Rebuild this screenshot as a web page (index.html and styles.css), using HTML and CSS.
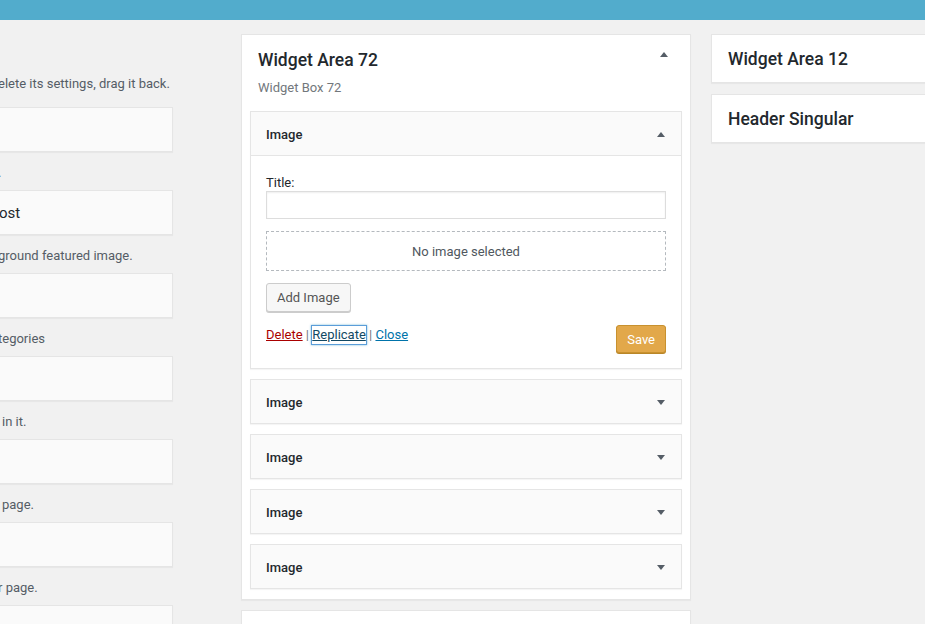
FILE: index.html
```html
<!DOCTYPE html>
<html lang="en">
<head>
<meta charset="utf-8">
<title>Widgets</title>
<link rel="stylesheet" href="styles.css">
</head>
<body>
<div class="topbar"></div>
<div class="page">
  <div class="col-left">
    <p class="intro">elete its settings, drag it back.</p>
    <div class="avail-box"></div>
    <p class="avail-desc">.</p>
    <div class="avail-box"><span class="avail-title">ost</span></div>
    <p class="avail-desc">ground featured image.</p>
    <div class="avail-box"></div>
    <p class="avail-desc">tegories</p>
    <div class="avail-box"></div>
    <p class="avail-desc ind-3">in it.</p>
    <div class="avail-box"></div>
    <p class="avail-desc ind-3">page.</p>
    <div class="avail-box"></div>
    <p class="avail-desc">r page.</p>
    <div class="avail-box"></div>
  </div>

  <div class="col-mid">
    <div class="sidebar">
      <div class="sidebar-head">
        <h2 class="sidebar-title">Widget Area 72</h2>
        <svg class="arrow arrow-head" width="8" height="5" viewBox="0 0 8 5"><path d="M0 5L4 0L8 5Z"/></svg>
      </div>
      <p class="sidebar-desc">Widget Box 72</p>

      <div class="widget">
        <div class="widget-top widget-top-open">
          <h3 class="widget-title">Image</h3>
          <svg class="arrow" width="8" height="5" viewBox="0 0 8 5"><path d="M0 5L4 0L8 5Z"/></svg>
        </div>
        <div class="widget-inside">
          <label class="field-label" for="title-72">Title:</label>
          <input class="field-input" id="title-72" type="text">
          <div class="preview">No image selected</div>
          <button class="btn" type="button">Add Image</button>
          <div class="actions">
            <div class="links"><a class="link link-delete" href="#">Delete</a> | <a class="link link-focus" href="#">Replicate</a> | <a class="link link-close" href="#">Close</a></div>
            <button class="btn-save" type="button">Save</button>
          </div>
        </div>
      </div>

      <div class="widget">
        <div class="widget-top">
          <h3 class="widget-title">Image</h3>
          <svg class="arrow" width="8" height="5" viewBox="0 0 8 5"><path d="M0 0L8 0L4 5Z"/></svg>
        </div>
      </div>
      <div class="widget">
        <div class="widget-top">
          <h3 class="widget-title">Image</h3>
          <svg class="arrow" width="8" height="5" viewBox="0 0 8 5"><path d="M0 0L8 0L4 5Z"/></svg>
        </div>
      </div>
      <div class="widget">
        <div class="widget-top">
          <h3 class="widget-title">Image</h3>
          <svg class="arrow" width="8" height="5" viewBox="0 0 8 5"><path d="M0 0L8 0L4 5Z"/></svg>
        </div>
      </div>
      <div class="widget">
        <div class="widget-top">
          <h3 class="widget-title">Image</h3>
          <svg class="arrow" width="8" height="5" viewBox="0 0 8 5"><path d="M0 0L8 0L4 5Z"/></svg>
        </div>
      </div>
    </div>
    <div class="sidebar sidebar-next"></div>
  </div>

  <div class="col-right">
    <div class="sidebar-closed"><h2 class="sidebar-title">Widget Area 12</h2></div>
    <div class="sidebar-closed"><h2 class="sidebar-title">Header Singular</h2></div>
  </div>
</div>
</body>
</html>
```

FILE: styles.css
```css
html, body {
  overflow: hidden;
}
body {
  margin: 0;
  background: #f1f1f1;
  font-family: Roboto, "Noto Sans", sans-serif;
  font-size: 13px;
  color: #444;
}
.topbar {
  height: 20px;
  background: #52accc;
}
.page {
  display: flex;
  align-items: flex-start;
}

/* left column (available widgets, cut off) */
.col-left {
  flex: none;
  width: 175px;
  margin-left: -2px;
  padding-top: 55px;
}
.intro {
  margin: 0 0 14px;
  line-height: 18px;
  color: #555d66;
  white-space: nowrap;
}
.avail-box {
  box-sizing: border-box;
  height: 45px;
  padding-top: 1px;
  background: #fafafa;
  border: 1px solid #e5e5e5;
  box-shadow: 0 1px 1px rgba(0,0,0,.04);
  display: flex;
  align-items: center;
}
.avail-title {
  font-size: 15px;
  color: #23282d;
}
.avail-desc {
  margin: 0;
  padding: 12px 0 8px;
  line-height: 18px;
  color: #555d66;
  white-space: nowrap;
}
.ind-3 {
  text-indent: 4px;
}

/* middle column */
.col-mid {
  flex: none;
  width: 450px;
  margin-left: 68px;
  padding-top: 14px;
}
.sidebar {
  box-sizing: border-box;
  background: #fff;
  border: 1px solid #e5e5e5;
  box-shadow: 0 1px 1px rgba(0,0,0,.04);
  padding: 0 8px;
}
.sidebar-next {
  margin-top: 10px;
  height: 60px;
}
.sidebar-head {
  display: flex;
  justify-content: space-between;
  align-items: flex-start;
  padding: 13px 14px 0 8px;
}
.sidebar-title {
  margin: 0;
  font-size: 17.5px;
  font-weight: 500;
  line-height: 24px;
  color: #23282d;
}
.arrow {
  display: block;
  flex: none;
  fill: #555d66;
}
.arrow-head {
  margin-top: 4px;
}
.sidebar-desc {
  margin: 7px 0 14px 8px;
  line-height: 18px;
  color: #72777c;
}

.widget {
  background: #fff;
  border: 1px solid #e5e5e5;
  box-shadow: 0 1px 1px rgba(0,0,0,.04);
  margin-bottom: 10px;
}
.widget-top {
  box-sizing: border-box;
  height: 43px;
  background: #fafafa;
  display: flex;
  align-items: center;
  justify-content: space-between;
  padding: 2px 16px 0 15px;
}
.widget-top-open {
  box-sizing: content-box;
  height: 41px;
  border-bottom: 1px solid #e5e5e5;
}
.widget-title {
  margin: 0;
  font-size: 13px;
  font-weight: 500;
  color: #23282d;
}
.widget-inside {
  padding: 17px 15px 15px;
}
.field-label {
  display: block;
  line-height: 18px;
  padding-top: 1px;
  margin-bottom: -1px;
  color: #23282d;
}
.field-input {
  display: block;
  box-sizing: border-box;
  width: 100%;
  height: 28px;
  margin: 0;
  border: 1px solid #ddd;
  box-shadow: inset 0 1px 2px rgba(0,0,0,.07);
  background: #fff;
  padding: 0 6px;
}
.preview {
  box-sizing: border-box;
  margin-top: 12px;
  height: 40px;
  border: 1px dashed #b4b9be;
  display: flex;
  align-items: center;
  justify-content: center;
  color: #50575e;
}
.btn {
  display: block;
  margin-top: 12px;
  height: 29px;
  padding: 0 10px;
  background: #f7f7f7;
  border: 1px solid #ccc;
  border-radius: 3px;
  box-shadow: 0 1px 0 #ccc;
  color: #555;
  font-family: inherit;
  font-size: 13px;
}
.actions {
  margin-top: 13px;
  display: flex;
  justify-content: space-between;
  align-items: flex-start;
}
.links {
  line-height: 18px;
  padding-top: 1px;
  color: #72777c;
}
.link {
  text-decoration: underline;
}
.link-delete {
  color: #a00;
}
.link-close {
  color: #0073aa;
}
.link-focus {
  display: inline-block;
  color: #124964;
  box-shadow: 0 0 0 1px #5b9dd9, 0 0 2px 1px rgba(30,140,190,.6);
}
.btn-save {
  height: 28px;
  padding: 0 10px;
  background: #e2a84a;
  border: 1px solid #c8912f;
  border-radius: 3px;
  box-shadow: 0 1px 0 #b98628;
  color: #fff;
  font-family: inherit;
  font-size: 13px;
}

/* right column */
.col-right {
  flex: none;
  width: 450px;
  margin-left: 20px;
  padding-top: 14px;
}
.sidebar-closed {
  box-sizing: border-box;
  height: 49px;
  margin-bottom: 11px;
  background: #fff;
  border: 1px solid #e5e5e5;
  box-shadow: 0 1px 1px rgba(0,0,0,.04);
  padding: 12px 16px 0;
}
```
